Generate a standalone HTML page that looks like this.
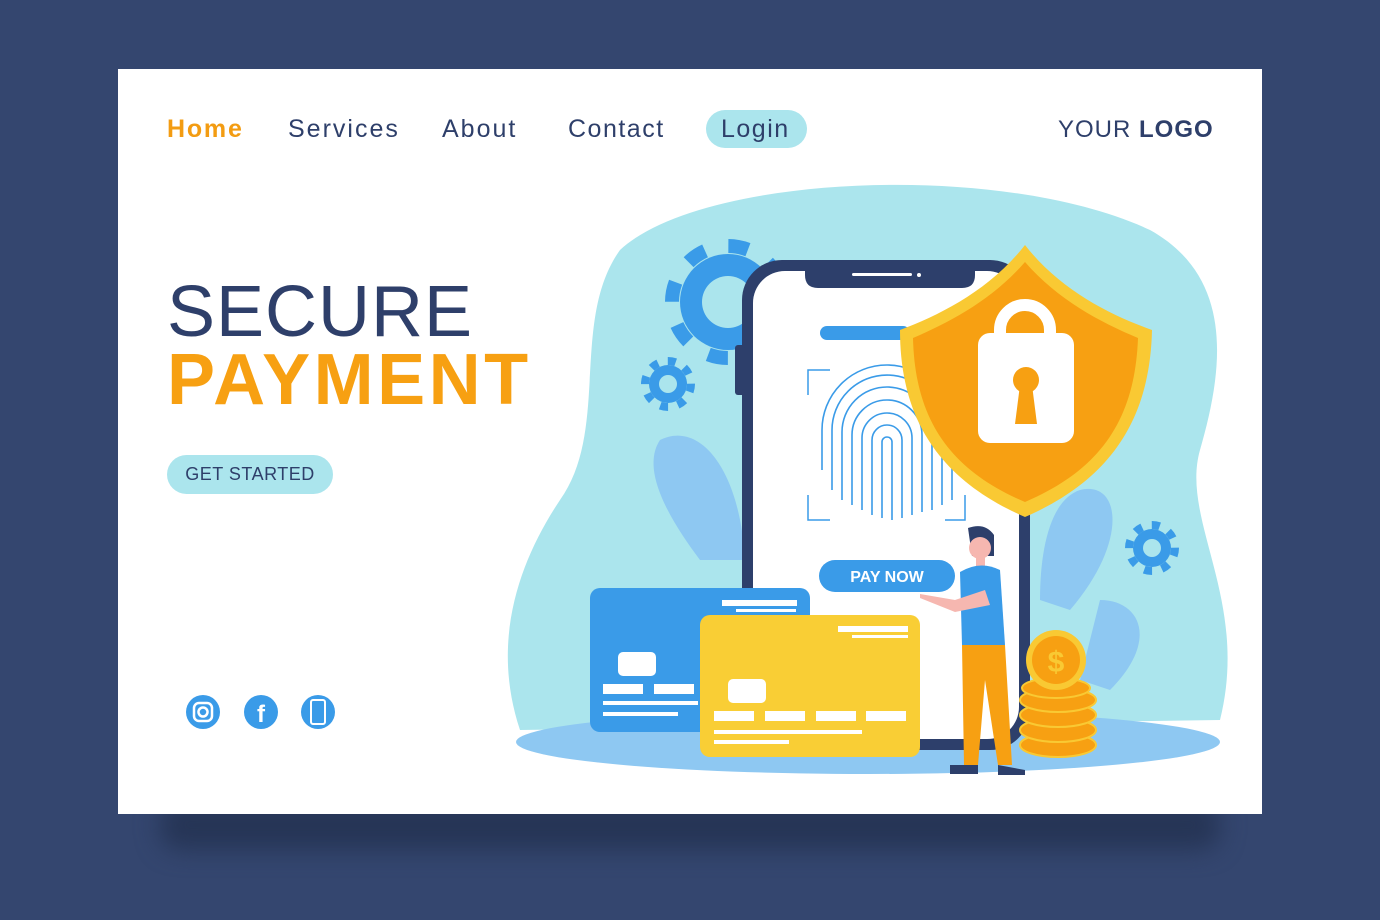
<!DOCTYPE html>
<html><head><meta charset="utf-8"><style>
html,body{margin:0;padding:0}
body{width:1380px;height:920px;background:#34466f;position:relative;overflow:hidden;font-family:"Liberation Sans",sans-serif}
.shadow{position:absolute;left:160px;top:800px;width:1060px;height:50px;background:#263556;filter:blur(12px);border-radius:20px}
.card{position:absolute;left:118px;top:69px;width:1144px;height:745px;background:#fff}
.nav{position:absolute;top:115px;font-size:25px;color:#2e3f6a;letter-spacing:1.5px}
.t{position:absolute;left:167px;font-size:72px;line-height:1}
</style></head><body>
<div class="shadow"></div>
<div class="card"></div>
<div class="nav" style="left:167px;color:#f39c12;font-weight:bold;letter-spacing:1.8px">Home</div>
<div class="nav" style="left:288px;letter-spacing:2px">Services</div>
<div class="nav" style="left:442px;letter-spacing:2px">About</div>
<div class="nav" style="left:568px;letter-spacing:1.5px">Contact</div>
<div style="position:absolute;left:706px;top:110px;width:101px;height:38px;border-radius:19px;background:#abe5ed"></div>
<div class="nav" style="left:721px;letter-spacing:1.5px">Login</div>
<div class="nav" style="left:1058px;top:116px;font-size:24px;letter-spacing:1px">YOUR <b>LOGO</b></div>
<div class="t" style="top:276px;color:#2e3f6a;letter-spacing:1px">SECURE</div>
<div class="t" style="top:344px;color:#f7a012;font-weight:bold;letter-spacing:3.5px">PAYMENT</div>
<div style="position:absolute;left:167px;top:455px;width:166px;height:39px;border-radius:20px;background:#abe5ed;color:#2e3f6a;font-size:18px;line-height:39px;text-align:center;letter-spacing:0.5px">GET STARTED</div>
<svg width="1380" height="920" style="position:absolute;left:0;top:0">
<g fill="#3a9be8">
<circle cx="203" cy="712" r="17"/><circle cx="261" cy="712" r="17"/><circle cx="318" cy="712" r="17"/>
</g>
<rect x="194" y="703" width="18" height="18" rx="5" fill="none" stroke="#fff" stroke-width="2.5"/>
<circle cx="203" cy="712" r="4.5" fill="none" stroke="#fff" stroke-width="2.5"/>
<text x="261" y="722" font-size="24" font-weight="bold" fill="#fff" text-anchor="middle" font-family="Liberation Sans">f</text>
<rect x="311" y="700" width="14" height="24" rx="2" fill="none" stroke="#fff" stroke-width="2"/>
<!-- blob -->
<path d="M620 250 C700 175 1000 160 1150 230 C1240 280 1220 380 1200 450 C1180 520 1250 600 1220 720 L520 730 C490 640 520 560 560 500 C610 430 570 320 620 250Z" fill="#abe5ed"/>
<ellipse cx="868" cy="742" rx="352" ry="32" fill="#8ec8f2"/>
<!-- leaves -->
<path d="M660 440 C700 420 740 470 745 560 L700 560 C670 520 640 470 660 440Z" fill="#8ec8f2"/>
<path d="M1080 490 C1120 480 1130 540 1070 610 L1040 600 C1040 550 1050 500 1080 490Z" fill="#8ec8f2"/>
<path d="M1100 600 C1140 600 1160 640 1110 690 L1080 680Z" fill="#8ec8f2"/>
<!-- gears -->
<g fill="#3a9be8">
<circle cx="728" cy="302" r="48"/><circle cx="728" cy="302" r="56" fill="none" stroke="#3a9be8" stroke-width="14" stroke-dasharray="20 24"/>
<circle cx="668" cy="384" r="19"/><circle cx="668" cy="384" r="23" fill="none" stroke="#3a9be8" stroke-width="8" stroke-dasharray="8 10"/>
<circle cx="1152" cy="548" r="19"/><circle cx="1152" cy="548" r="23" fill="none" stroke="#3a9be8" stroke-width="8" stroke-dasharray="8 10"/>
</g>
<circle cx="728" cy="302" r="26" fill="#abe5ed"/>
<circle cx="668" cy="384" r="9" fill="#abe5ed"/>
<circle cx="1152" cy="548" r="9" fill="#abe5ed"/>
<!-- phone -->
<rect x="742" y="260" width="288" height="490" rx="40" fill="#2d3f6b"/>
<rect x="735" y="345" width="10" height="50" rx="3" fill="#2d3f6b"/>
<rect x="753" y="271" width="266" height="468" rx="32" fill="#fff"/>
<path d="M805 265 L975 265 L975 275 Q975 288 962 288 L818 288 Q805 288 805 275Z" fill="#2d3f6b"/>
<rect x="852" y="273" width="60" height="3" rx="1.5" fill="#fff"/><circle cx="919" cy="275" r="2" fill="#fff"/>
<rect x="820" y="326" width="90" height="14" rx="7" fill="#3a9be8"/>
<path d="M808 395 V370 H830 M945 370 H965 V395 M808 495 V520 H830 M945 520 H965 V495" fill="none" stroke="#3a9be8" stroke-width="1.5"/>
<g fill="none" stroke="#3a9be8" stroke-width="1.6">
<path d="M822 470 V430 A65 65 0 0 1 952 430 V500"/>
<path d="M832 490 V430 A55 55 0 0 1 942 430 V505"/>
<path d="M842 500 V432 A45 45 0 0 1 932 432 V510"/>
<path d="M852 505 V435 A35 35 0 0 1 922 435 V512"/>
<path d="M862 510 V438 A25 25 0 0 1 912 438 V515"/>
<path d="M872 515 V440 A15 15 0 0 1 902 440 V518"/>
<path d="M882 518 V442 A5 5 0 0 1 892 442 V520"/>
</g>
<rect x="819" y="560" width="136" height="32" rx="16" fill="#3a9be8"/>
<text x="887" y="582" font-size="16" font-weight="bold" fill="#fff" text-anchor="middle" font-family="Liberation Sans">PAY NOW</text>
<!-- shield -->
<path d="M1025 245 C1060 290 1110 315 1152 330 C1150 420 1110 480 1025 517 C940 480 900 420 900 330 C940 315 990 290 1025 245Z" fill="#f9c933"/>
<path d="M1025 262 C1058 300 1100 322 1138 338 C1135 420 1100 470 1025 502 C950 470 915 420 913 338 C950 322 992 300 1025 262Z" fill="#f7a012"/>
<path d="M1000 340 V330 A25 25 0 0 1 1050 330 V340" fill="none" stroke="#fff" stroke-width="12"/>
<rect x="978" y="333" width="96" height="110" rx="12" fill="#fff"/>
<circle cx="1026" cy="380" r="13" fill="#f7a012"/>
<path d="M1020 385 L1032 385 L1037 424 L1015 424Z" fill="#f7a012"/>
<!-- cards -->
<rect x="590" y="588" width="220" height="144" rx="10" fill="#3a9be8"/>
<rect x="722" y="600" width="75" height="6" fill="#fff"/><rect x="736" y="609" width="60" height="3" fill="#fff"/>
<rect x="618" y="652" width="38" height="24" rx="5" fill="#fff"/>
<rect x="603" y="684" width="40" height="10" fill="#fff"/><rect x="654" y="684" width="40" height="10" fill="#fff"/>
<rect x="603" y="701" width="95" height="4" fill="#fff"/><rect x="603" y="712" width="75" height="4" fill="#fff"/>
<rect x="700" y="615" width="220" height="142" rx="10" fill="#f9ce35"/>
<rect x="838" y="626" width="70" height="6" fill="#fff"/><rect x="852" y="635" width="56" height="3" fill="#fff"/>
<rect x="728" y="679" width="38" height="24" rx="5" fill="#fff"/>
<rect x="714" y="711" width="40" height="10" fill="#fff"/><rect x="765" y="711" width="40" height="10" fill="#fff"/><rect x="816" y="711" width="40" height="10" fill="#fff"/><rect x="866" y="711" width="40" height="10" fill="#fff"/>
<rect x="714" y="730" width="148" height="4" fill="#fff"/><rect x="714" y="740" width="75" height="4" fill="#fff"/>
<!-- coins -->
<g fill="#f7a012" stroke="#f9c933" stroke-width="2">
<ellipse cx="1058" cy="745" rx="38" ry="12"/><ellipse cx="1058" cy="730" rx="38" ry="12"/><ellipse cx="1058" cy="715" rx="38" ry="12"/><ellipse cx="1058" cy="700" rx="38" ry="12"/><ellipse cx="1056" cy="688" rx="34" ry="10"/>
</g>
<circle cx="1056" cy="660" r="30" fill="#f9c933"/><circle cx="1056" cy="660" r="24" fill="#f7a012"/>
<text x="1056" y="672" font-size="30" font-weight="bold" fill="#f9c933" text-anchor="middle" font-family="Liberation Sans">$</text>
<!-- person -->
<path d="M968 528 Q985 522 994 535 L994 556 L972 556Z" fill="#2d3f6b"/>
<circle cx="980" cy="548" r="11" fill="#f6b7b0"/>
<rect x="976" y="555" width="9" height="12" fill="#f6b7b0"/>
<path d="M960 572 Q980 560 1000 570 L1005 645 L962 645Z" fill="#3a9be8"/>
<path d="M920 594 L955 600 L985 590 L990 605 L955 612 L920 598Z" fill="#f6b7b0"/>
<path d="M962 645 L1005 645 L1012 765 L998 765 L985 680 L978 765 L964 765Z" fill="#f7a012"/>
<path d="M950 765 L978 765 L978 774 L950 774Z M998 765 L1025 770 L1025 775 L998 775Z" fill="#2d3f6b"/>
</svg>
</body></html>
